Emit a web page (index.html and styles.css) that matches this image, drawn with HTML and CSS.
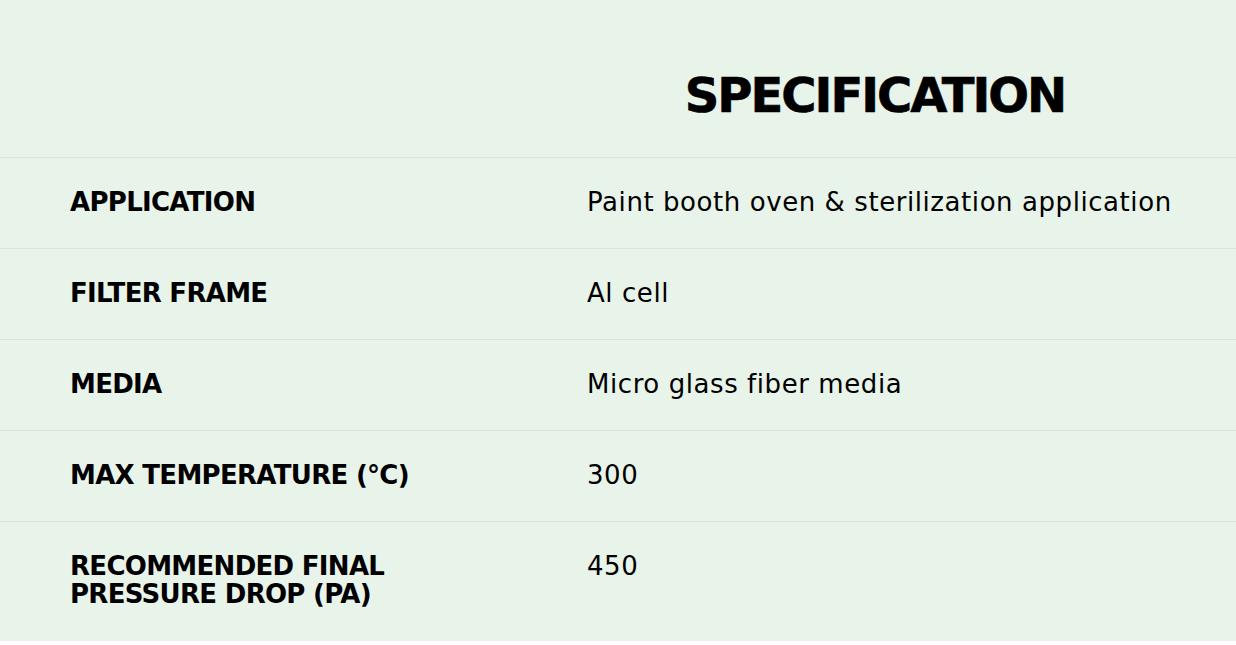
FILE: index.html
```html
<!DOCTYPE html>
<html lang="en">
<head>
<meta charset="utf-8">
<title>Specification</title>
<link rel="stylesheet" href="styles.css">
</head>
<body>
<section class="spec">
  <header class="spec-head">
    <div class="spec-head-spacer"></div>
    <h2 class="spec-title">SPECIFICATION</h2>
  </header>
  <div class="spec-table">
    <div class="spec-row">
      <div class="spec-label">APPLICATION</div>
      <div class="spec-value">Paint booth oven &amp; sterilization application</div>
    </div>
    <div class="spec-row">
      <div class="spec-label">FILTER FRAME</div>
      <div class="spec-value">Al cell</div>
    </div>
    <div class="spec-row">
      <div class="spec-label">MEDIA</div>
      <div class="spec-value">Micro glass fiber media</div>
    </div>
    <div class="spec-row">
      <div class="spec-label">MAX TEMPERATURE (°C)</div>
      <div class="spec-value">300</div>
    </div>
    <div class="spec-row spec-row-last">
      <div class="spec-label">RECOMMENDED FINAL<br>PRESSURE DROP (PA)</div>
      <div class="spec-value">450</div>
    </div>
  </div>
</section>
</body>
</html>
```

FILE: styles.css
```css
* {
  box-sizing: border-box;
}

html, body {
  margin: 0;
  padding: 0;
  background: #ffffff;
}

body {
  font-family: "DejaVu Sans", "Liberation Sans", sans-serif;
  color: #000000;
}

.spec {
  background: #e8f3ea;
  height: 641px;
}

.spec-head {
  display: grid;
  grid-template-columns: 514px 1fr;
  height: 157px;
  padding-top: 71px;
}

.spec-title {
  margin: 0;
  text-align: center;
  font-size: 48px;
  line-height: 1;
  font-weight: 700;
  letter-spacing: -2px;
  -webkit-text-stroke: 0.6px #000000;
}

.spec-row {
  display: grid;
  grid-template-columns: 517px 1fr;
  padding: 30px 0 32px 70px;
  border-top: 1px solid #dbe5dd;
  font-size: 26px;
  line-height: 28px;
}

.spec-row-last {
  padding-bottom: 33px;
}

.spec-label {
  font-weight: 700;
  letter-spacing: -0.7px;
}

.spec-value {
  font-weight: 400;
  letter-spacing: 0.57px;
}
```
